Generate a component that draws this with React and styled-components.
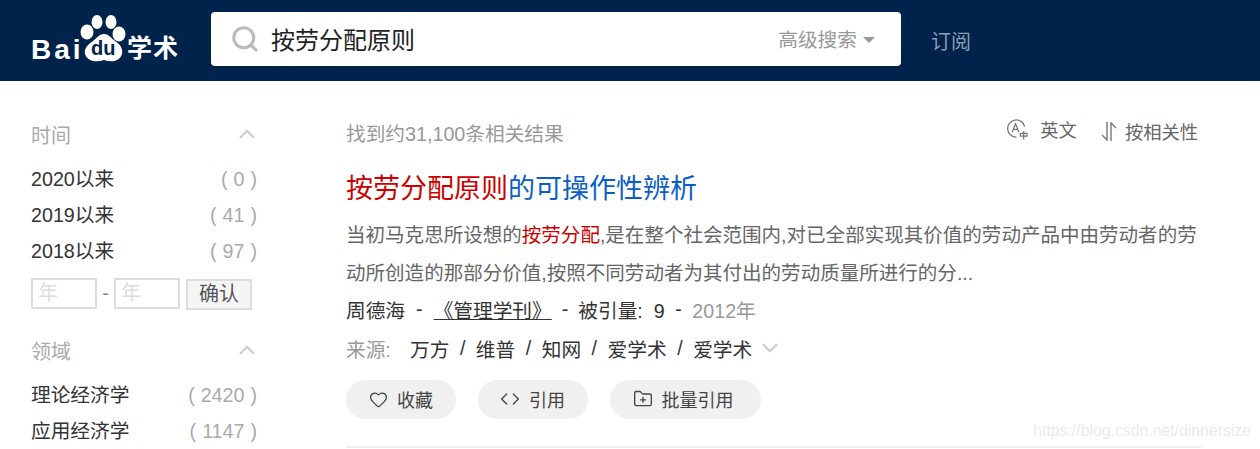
import React from "react";
import styled, { createGlobalStyle } from "styled-components";
import { Heart, Code, FolderPlus, ChevronUp, ChevronDown, Search } from "lucide-react";

const Global = createGlobalStyle`
  html, body {
    margin: 0;
    padding: 0;
    background: #fff;
    height: 449px;
    overflow: hidden;
    font-family: "Liberation Sans", "Noto Sans CJK SC", sans-serif;
  }
`;

const Header = styled.header`
  display: flex;
  align-items: center;
  height: 81px;
  padding-left: 31px;
  background: #00234b;
`;

const Logo = styled.div`
  display: flex;
  align-items: flex-end;
  width: 180px;
  height: 47px;
  margin-top: -4px;
  color: #fff;
`;

const LogoLatin = styled.span`
  width: 49px;
  font-size: 28px;
  font-weight: 700;
  line-height: 24px;
  letter-spacing: 3px;
  white-space: nowrap;
`;

const LogoCn = styled.span`
  font-size: 25px;
  font-weight: 700;
  line-height: 27px;
  letter-spacing: 1px;
`;

const SearchBox = styled.div`
  display: flex;
  align-items: center;
  width: 690px;
  height: 54px;
  margin-top: -4px;
  padding: 0 26px 0 19px;
  box-sizing: border-box;
  background: #fff;
  border-radius: 4px;
`;

const SearchText = styled.div`
  flex: 1;
  margin-left: 11px;
  font-size: 24px;
  color: #222;
`;

const Advanced = styled.div`
  display: flex;
  align-items: center;
  gap: 6px;
  font-size: 19.7px;
  color: #999;
`;

const Caret = styled.i`
  width: 0;
  height: 0;
  margin-top: 2px;
  border: 6px solid transparent;
  border-top: 6px solid #999;
  border-bottom: 0;
`;

const Subscribe = styled.a`
  margin-left: 30px;
  font-size: 20px;
  color: #8d9db2;
`;

const Body = styled.div`
  display: flex;
  padding-left: 31px;
`;

const Side = styled.aside`
  width: 226px;
  padding-top: 35px;
`;

const SideHead = styled.div`
  display: flex;
  align-items: center;
  justify-content: space-between;
  height: 36px;
  margin-bottom: 9px;
  font-size: 20px;
  color: #aaa;
  svg {
    margin-right: -3px;
  }
`;

const SideRow = styled.div`
  display: flex;
  justify-content: space-between;
  height: 36px;
  line-height: 36px;
  font-size: 19.7px;
  color: #333;
`;

const Count = styled.span`
  color: #aaa;
  word-spacing: 0.5px;
`;

const RangeRow = styled.div`
  display: flex;
  align-items: flex-start;
  margin: 9px 0 22px;
`;

const YearInput = styled.div`
  width: 66px;
  height: 31px;
  padding-left: 5px;
  box-sizing: border-box;
  border: 2px solid #ddd;
  font-size: 20px;
  line-height: 27px;
  color: #ddd;
`;

const Dash = styled.span`
  width: 17px;
  text-align: center;
  font-size: 20px;
  line-height: 31px;
  color: #888;
`;

const Confirm = styled.button`
  width: 66px;
  height: 31px;
  margin: 1px 0 0 6px;
  padding: 0;
  box-sizing: border-box;
  border: 2px solid #ddd;
  background: #f5f5f5;
  font: inherit;
  font-size: 20px;
  line-height: 27px;
  color: #555;
`;

const Main = styled.main`
  width: 855px;
  margin-left: 89px;
  padding-top: 32px;
`;

const TopRow = styled.div`
  display: flex;
  align-items: center;
  height: 38px;
  padding-right: 3px;
  font-size: 19.7px;
  color: #999;
`;

const TopTool = styled.div`
  display: flex;
  align-items: center;
  gap: ${(p) => p.$gap}px;
  margin-left: ${(p) => p.$left || "auto"};
  margin-top: ${(p) => p.$top}px;
  font-size: 18.3px;
  color: #666;
`;

const Title = styled.h3`
  margin: 19px 0 0;
  font-size: 27px;
  font-weight: 400;
  line-height: 38px;
  color: #0b5fc4;
  em {
    font-style: normal;
    color: #c00;
  }
`;

const Abstract = styled.p`
  margin: 8px 0 -2px;
  width: 852px;
  font-size: 19.54px;
  line-height: 38px;
  color: #666;
  em {
    font-style: normal;
    color: #c00;
  }
`;

const Meta = styled.div`
  display: flex;
  align-items: center;
  height: 38px;
  margin-top: ${(p) => p.$top || 0}px;
  font-size: 19.7px;
  color: #333;
`;

const Sep = styled.span`
  margin: 0 ${(p) => p.$gap || 11}px;
`;

const Journal = styled.a`
  text-decoration: underline;
  text-underline-offset: 1px;
`;

const Year = styled.span`
  color: #999;
`;

const SourceLabel = styled.span`
  width: 64px;
  color: #999;
`;

const Actions = styled.div`
  display: flex;
  gap: 22px;
  margin-top: 13px;
  padding-bottom: 27px;
  border-bottom: 2px solid #eee;
`;

const Action = styled.button`
  display: flex;
  align-items: center;
  justify-content: center;
  gap: 9px;
  width: ${(p) => p.$w}px;
  height: 39px;
  padding: 0 ${(p) => p.$shift || 0}px 1px 0;
  border: 0;
  border-radius: 20px;
  background: #f0f0f0;
  font: inherit;
  font-size: 18px;
  color: #444;
`;

const Watermark = styled.div`
  position: absolute;
  right: 9px;
  top: 422px;
  font-size: 15.8px;
  color: rgba(200, 200, 200, 0.4);
`;

const Paw = () => (
  <svg width="47" height="47" viewBox="0 0 47 47" fill="#fff">
    <ellipse cx="7" cy="17" rx="6.5" ry="7.5" />
    <ellipse cx="17" cy="7" rx="5.5" ry="7" />
    <ellipse cx="31" cy="7" rx="5.5" ry="7" />
    <ellipse cx="39" cy="19" rx="6.5" ry="7.5" />
    <path d="M24 19c5 0 7 4 11 7 6 4 8 8 7 13-2 7-10 9-18 6-8 3-17 1-19-6-1-5 2-9 8-13 4-3 6-7 11-7z" />
    <text x="11" y="40" fontFamily="Liberation Sans" fontWeight="700" fontSize="20" fill="#00234b">du</text>
  </svg>
);

const TranslateIcon = () => (
  <svg width="22" height="22" viewBox="0 0 23 23" fill="none" stroke="#777" strokeWidth="1.3">
    <path d="M19.5 9a9 9 0 1 0-8.5 11" />
    <path d="M6.5 15l3.5-9 3.5 9M8 12h5" />
    <path d="M15 16h7v3h-7zM18.5 13.5v9" />
  </svg>
);

const SortIcon = () => (
  <svg width="16" height="19" viewBox="0 0 16 19" fill="none" stroke="#777" strokeWidth="1.4">
    <path d="M6 0v18L1 13M10 19V1l5 5" />
  </svg>
);

const App = () => (
  <>
    <Global />
    <Header>
      <Logo>
        <LogoLatin>Bai</LogoLatin>
        <Paw />
        <LogoCn>学术</LogoCn>
      </Logo>
      <SearchBox>
        <Search size={30} color="#bbb" strokeWidth={2.4} />
        <SearchText>按劳分配原则</SearchText>
        <Advanced>
          高级搜索
          <Caret />
        </Advanced>
      </SearchBox>
      <Subscribe>订阅</Subscribe>
    </Header>
    <Body>
      <Side>
        <SideHead>
          时间
          <ChevronUp size={26} color="#ccc" strokeWidth={2} />
        </SideHead>
        <SideRow>2020以来<Count>( 0 )</Count></SideRow>
        <SideRow>2019以来<Count>( 41 )</Count></SideRow>
        <SideRow>2018以来<Count>( 97 )</Count></SideRow>
        <RangeRow>
          <YearInput>年</YearInput>
          <Dash>-</Dash>
          <YearInput>年</YearInput>
          <Confirm>确认</Confirm>
        </RangeRow>
        <SideHead>
          领域
          <ChevronUp size={26} color="#ccc" strokeWidth={2} />
        </SideHead>
        <SideRow>理论经济学<Count>( 2420 )</Count></SideRow>
        <SideRow>应用经济学<Count>( 1147 )</Count></SideRow>
      </Side>
      <Main>
        <TopRow>
          找到约31,100条相关结果
          <TopTool $gap={12} $top={-6}>
            <TranslateIcon />
            英文
          </TopTool>
          <TopTool $gap={8} $top={-2} $left="24px">
            <SortIcon />
            按相关性
          </TopTool>
        </TopRow>
        <Title>
          <em>按劳分配原则</em>的可操作性辨析
        </Title>
        <Abstract>
          当初马克思所设想的<em>按劳分配</em>,是在整个社会范围内,对已全部实现其价值的劳动产品中由劳动者的劳动所创造的那部分价值,按照不同劳动者为其付出的劳动质量所进行的分...
        </Abstract>
        <Meta>
          周德海<Sep>-</Sep>
          <Journal>《管理学刊》</Journal>
          <Sep $gap={10}>-</Sep>被引量:&nbsp;&nbsp;9<Sep $gap={10.5}>-</Sep>
          <Year>2012年</Year>
        </Meta>
        <Meta $top={1}>
          <SourceLabel>来源:</SourceLabel>
          万方<Sep $gap={10.5}>/</Sep>维普<Sep $gap={10.5}>/</Sep>知网<Sep $gap={10.5}>/</Sep>爱学术<Sep $gap={10.5}>/</Sep>爱学术
          <ChevronDown size={26} color="#ccc" strokeWidth={2} style={{ marginLeft: 5 }} />
        </Meta>
        <Actions>
          <Action $w={110}>
            <Heart size={19} strokeWidth={1.6} />
            收藏
          </Action>
          <Action $w={110} $shift={1}>
            <Code size={20} strokeWidth={1.6} />
            引用
          </Action>
          <Action $w={151} $shift={5}>
            <FolderPlus size={20} strokeWidth={1.6} />
            批量引用
          </Action>
        </Actions>
      </Main>
    </Body>
    <Watermark>https://blog.csdn.net/dinnersize</Watermark>
  </>
);

export default App;
